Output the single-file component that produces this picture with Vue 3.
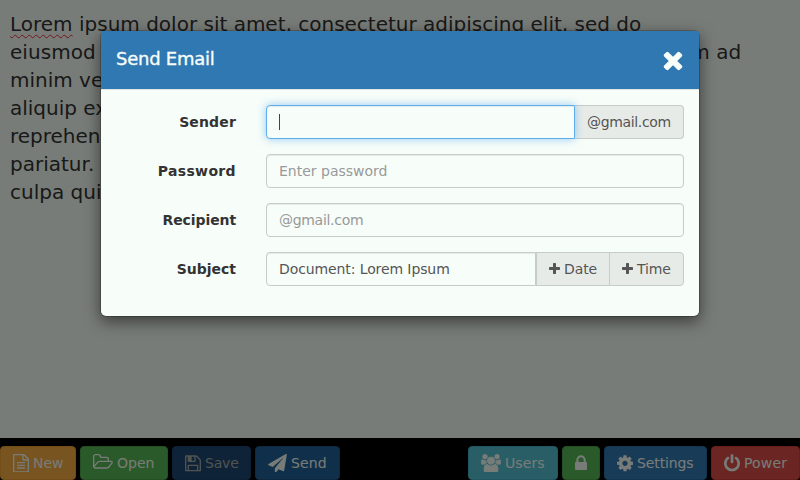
<script setup>
const editorLines = [
  ' ipsum dolor sit amet, consectetur adipiscing elit, sed do',
  'eiusmod tempor incididunt ut labore et dolore magna aliqua. Ut enim ad',
  'minim veniam, quis nostrud exercitation ullamco laboris nisi ut',
  'aliquip ex ea commodo consequat. Duis aute irure dolor in',
  'reprehenderit in voluptate velit esse cillum dolore eu fugiat nulla',
  'pariatur. Excepteur sint occaecat cupidatat non proident, sunt in',
  'culpa qui officia deserunt mollit anim id est laborum.'
]

const plus = 'M1600 736v192q0 40-28 68t-68 28h-416v416q0 40-28 68t-68 28h-192q-40 0-68-28t-28-68v-416h-416q-40 0-68-28t-28-68v-192q0-40 28-68t68-28h416v-416q0-40 28-68t68-28h192q40 0 68 28t28 68v416h416q40 0 68 28t28 68z'
const times = 'M1490 1322q0 40-28 68l-136 136q-28 28-68 28t-68-28l-294-294-294 294q-28 28-68 28t-68-28l-136-136q-28-28-28-68t28-68l294-294-294-294q-28-28-28-68t28-68l136-136q28-28 68-28t68 28l294 294 294-294q28-28 68-28t68 28l136 136q28 28 28 68t-28 68l-294 294 294 294q28 28 28 68z'

const leftButtons = [
  { kind: 'new', label: 'New', w: 16, box: '128 0 1536 1792', d: 'M1596 380q28 28 48 76t20 88v1152q0 40-28 68t-68 28h-1344q-40 0-68-28t-28-68v-1600q0-40 28-68t68-28h896q40 0 88 20t76 48zm-444-244v376h376q-10-29-22-41l-313-313q-12-12-41-22zm384 1528v-1024h-416q-40 0-68-28t-28-68v-416h-768v1536h1280zm-1024-864q0-14 9-23t23-9h704q14 0 23 9t9 23v64q0 14-9 23t-23 9h-704q-14 0-23-9t-9-23v-64zm736 224q14 0 23 9t9 23v64q0 14-9 23t-23 9h-704q-14 0-23-9t-9-23v-64q0-14 9-23t23-9h704zm0 256q14 0 23 9t9 23v64q0 14-9 23t-23 9h-704q-14 0-23-9t-9-23v-64q0-14 9-23t23-9h704z' },
  { kind: 'open', label: 'Open', w: 20, box: '0 0 1920 1792', d: 'M1781 803q0-35-53-35h-1088q-40 0-85.5 21.5t-71.5 52.5l-294 363q-18 24-18 40 0 35 53 35h1088q40 0 86-22t71-53l294-363q18-22 18-39zm-1141-163h768v-160q0-40-28-68t-68-28h-576q-40 0-68-28t-28-68v-64q0-40-28-68t-68-28h-320q-40 0-68 28t-28 68v853l256-315q44-53 116-87.5t140-34.5zm1269 163q0 62-46 120l-295 363q-43 53-116 87.5t-140 34.5h-1088q-92 0-158-66t-66-158v-960q0-92 66-158t158-66h320q92 0 158 66t66 158v32h544q92 0 158 66t66 158v160h192q54 0 99 24.5t67 70.5q15 32 15 68z' },
  { kind: 'save', label: 'Save', w: 16, box: '128 0 1536 1792', d: 'M512 1536h768v-384h-768v384zm896 0h128v-896q0-14-10-38.5t-20-34.5l-281-281q-10-10-34-20t-39-10v416q0 40-28 68t-68 28h-576q-40 0-68-28t-28-68v-416h-128v1280h128v-416q0-40 28-68t68-28h832q40 0 68 28t28 68v416zm-384-928v-320q0-13-9.5-22.5t-22.5-9.5h-192q-13 0-22.5 9.5t-9.5 22.5v320q0 13 9.5 22.5t22.5 9.5h192q13 0 22.5-9.5t9.5-22.5zm640 32v928q0 40-28 68t-68 28h-1344q-40 0-68-28t-28-68v-1344q0-40 28-68t68-28h928q40 0 88 20t76 48l280 280q28 28 48 76t20 88z' },
  { kind: 'send', label: 'Send', w: 19, box: '0 0 1792 1792', d: 'M1764 11q33 24 27 64l-256 1536q-5 29-32 45-14 8-31 8-11 0-24-5l-453-185-242 295q-18 23-49 23-13 0-22-4-19-7-30.5-23.5t-11.5-36.5v-349l864-1059-1069 925-395-162q-37-14-40-55-2-40 32-59l1664-960q15-9 32-9 20 0 36 11z' }
]

const rightButtons = [
  { kind: 'users', label: 'Users', w: 20, box: '0 0 1920 1792', d: 'M593 896q-162 5-265 128h-134q-82 0-138-40.5t-56-118.5q0-353 124-353 6 0 43.5 21t97.5 42.5 119 21.5q67 0 133-23-5 37-5 66 0 139 81 256zm1071 637q0 120-73 189.5t-194 69.5h-874q-121 0-194-69.5t-73-189.5q0-53 3.5-103.5t14-109 26.5-108.5 43-97.5 62-81 85.5-53.5 111.5-20q10 0 43 21.5t73 48 107 48 135 21.5 135-21.5 107-48 73-48 43-21.5q61 0 111.5 20t85.5 53.5 62 81 43 97.5 26.5 108.5 14 109 3.5 103.5zm-1024-1277q0 106-75 181t-181 75-181-75-75-181 75-181 181-75 181 75 75 181zm704 384q0 159-112.5 271.5t-271.5 112.5-271.5-112.5-112.5-271.5 112.5-271.5 271.5-112.5 271.5 112.5 112.5 271.5zm576 225q0 78-56 118.5t-138 40.5h-134q-103-123-265-128 81-117 81-256 0-29-5-66 66 23 133 23 59 0 119-21.5t97.5-42.5 43.5-21q124 0 124 353zm-128-609q0 106-75 181t-181 75-181-75-75-181 75-181 181-75 181 75 75 181z' },
  { kind: 'lock', label: '', w: 12, box: '320 0 1152 1792', d: 'M640 768h512v-192q0-106-75-181t-181-75-181 75-75 181v192zm832 96v576q0 40-28 68t-68 28h-960q-40 0-68-28t-28-68v-576q0-40 28-68t68-28h32v-192q0-184 132-316t316-132 316 132 132 316v192h32q40 0 68 28t28 68z' },
  { kind: 'settings', label: 'Settings', w: 16, box: '128 0 1536 1792', d: 'M1152 896q0-106-75-181t-181-75-181 75-75 181 75 181 181 75 181-75 75-181zm512-109v222q0 12-8 23t-20 13l-185 28q-19 54-39 91 35 50 107 138 10 12 10 25t-9 23q-27 37-99 108t-94 71q-12 0-26-9l-138-108q-44 23-91 38-16 136-29 186-7 28-36 28h-222q-14 0-24.5-8.5t-11.5-21.5l-28-184q-49-16-90-37l-141 107q-10 9-25 9-14 0-25-11-126-114-165-168-7-10-7-23 0-12 8-23 15-21 51-66.5t54-70.5q-27-50-41-99l-183-27q-13-2-21-12.5t-8-23.5v-222q0-12 8-23t19-13l186-28q14-46 39-92-40-57-107-138-10-12-10-24 0-10 9-23 26-36 98.5-107.5t94.5-71.5q13 0 26 10l138 107q44-23 91-38 16-136 29-186 7-28 36-28h222q14 0 24.5 8.5t11.5 21.5l28 184q49 16 90 37l142-107q9-9 24-9 13 0 25 10 129 119 165 170 7 8 7 22 0 12-8 23-15 21-51 66.5t-54 70.5q26 50 41 98l183 28q13 2 21 12.5t8 23.5z' },
  { kind: 'power', label: 'Power', w: 16, box: '128 0 1536 1792', d: 'M1664 896q0 156-61 298t-164 245-245 164-298 61-298-61-245-164-164-245-61-298q0-182 80.5-343t226.5-270q43-32 95.5-25t83.5 50q32 42 24.5 94.5t-49.5 84.5q-98 74-151.5 181t-53.5 228q0 104 40.5 198.5t109.5 163.5 163.5 109.5 198.5 40.5 198.5-40.5 163.5-109.5 109.5-163.5 40.5-198.5q0-121-53.5-228t-151.5-181q-42-32-49.5-84.5t24.5-94.5q31-43 84-50t95 25q146 109 226.5 270t80.5 343zm-640-768v640q0 52-38 90t-90 38-90-38-38-90v-640q0-52 38-90t90-38 90 38 38 90z' }
]
</script>

<template>
  <div class="screen">
    <main class="editor">
      <div v-for="(line, i) in editorLines" :key="i" class="line"><span v-if="i === 0" class="misspelled">Lorem</span>{{ line }}</div>
    </main>
    <footer class="toolbar">
      <div v-for="(group, g) in [leftButtons, rightButtons]" :key="g" class="group">
        <button v-for="b in group" :key="b.kind" class="btn" :class="b.kind">
          <svg class="icon" :width="b.w" height="18.67" :viewBox="b.box"><path :d="b.d" /></svg>
          <span v-if="b.label">{{ b.label }}</span>
        </button>
      </div>
    </footer>
    <div class="backdrop">
      <section class="modal">
        <header class="modal-header">
          <h4>Send Email</h4>
          <svg class="close" width="22" height="28" viewBox="192 0 1408 1792"><path :d="times" /></svg>
        </header>
        <div class="modal-body">
          <div class="row">
            <label class="l-sender">Sender</label>
            <div class="field">
              <div class="control focused"><span class="caret"></span></div>
              <div class="addon mail">@gmail.com</div>
            </div>
          </div>
          <div class="row">
            <label class="l-password">Password</label>
            <div class="field"><div class="control placeholder">Enter password</div></div>
          </div>
          <div class="row">
            <label class="l-recipient">Recipient</label>
            <div class="field"><div class="control placeholder tight">@gmail.com</div></div>
          </div>
          <div class="row">
            <label>Subject</label>
            <div class="field">
              <div class="control joined">Document: Lorem Ipsum</div>
              <button class="addon date"><svg width="11" height="14" viewBox="192 0 1408 1792"><path :d="plus" /></svg>Date</button>
              <button class="addon time"><svg width="11" height="14" viewBox="192 0 1408 1792"><path :d="plus" /></svg>Time</button>
            </div>
          </div>
        </div>
      </section>
    </div>
  </div>
</template>

<style>
body { margin: 0; overflow: hidden; }
</style>

<style scoped>
* { box-sizing: border-box; }
.screen {
  position: relative;
  width: 800px;
  height: 480px;
  display: flex;
  flex-direction: column;
  overflow: hidden;
  background: #f0f8f1;
  font: 14px/20px "DejaVu Sans", sans-serif;
  color: #333;
}
button { font: inherit; margin: 0; }
svg { display: block; flex: none; fill: currentColor; }
.editor { flex: 1; padding: 10px; font-size: 20px; line-height: 28px; color: #303330; }
.line { white-space: pre; }
.line:nth-child(2) { letter-spacing: .055px; }
.misspelled {
  text-decoration: underline wavy #e83038 1px;
  text-decoration-skip-ink: none;
  text-underline-offset: 3px;
}
.toolbar {
  height: 42px;
  padding-top: 8px;
  display: flex;
  justify-content: space-between;
  background: #000;
}
.group { display: flex; gap: 4px; }
.btn {
  height: 34px;
  padding: 0 12px;
  display: flex;
  align-items: center;
  gap: 4px;
  border: 1px solid transparent;
  border-radius: 4px;
  color: #f0f8f1;
  white-space: nowrap;
}
.new { width: 76px; background: #f0a840; border-color: #e69a30; }
.open { width: 88px; background: #54b454; border-color: #48a048; }
.save { width: 79px; background: #1e4670; border-color: #1b4068; color: #a2a6a3; letter-spacing: -.2px; }
.send { width: 85px; background: #205f94; border-color: #1c527f; letter-spacing: .1px; }
.users { width: 90px; background: #54bccc; border-color: #42aec0; letter-spacing: .1px; }
.lock { width: 38px; background: #54b454; border-color: #48a048; }
.settings { width: 103px; background: #3078b1; border-color: #286a9e; letter-spacing: -.12px; }
.power { width: 89px; background: #d64c46; border-color: #cc3c36; letter-spacing: .15px; }
.backdrop {
  position: absolute;
  inset: 0;
  padding: 30px 100px;
  background: rgba(0, 0, 0, .5);
}
.modal {
  width: 600px;
  height: 287px;
  border: 1px solid rgba(0, 0, 0, .2);
  border-radius: 6px;
  background: #f7fdf9;
  background-clip: padding-box;
  box-shadow: 0 5px 15px rgba(0, 0, 0, .5);
}
.modal-header {
  height: 59px;
  padding: 0 15px;
  display: flex;
  align-items: center;
  justify-content: space-between;
  border-bottom: 1px solid #dfe5e1;
  border-radius: 2px 2px 0 0;
  background: #3078b1;
  color: #f7fdf9;
}
h4 {
  margin: 0 0 2px;
  font-size: 18px;
  line-height: 20px;
  font-weight: 500;
  letter-spacing: -.25px;
  -webkit-text-stroke: .35px currentColor;
}
.close { margin: 0; }
.modal-body { padding: 15px; display: flex; flex-direction: column; gap: 15px; }
.row { display: flex; align-items: center; gap: 30px; }
label { width: 120px; text-align: right; font-weight: 700; }
.l-sender { letter-spacing: .15px; }
.l-password { letter-spacing: .35px; }
.l-recipient { letter-spacing: -.1px; }
.field { flex: 1; display: flex; height: 34px; }
.control, .addon {
  height: 34px;
  display: flex;
  align-items: center;
  padding: 0 12px;
  border: 1px solid #c6ccc8;
  border-radius: 4px;
  white-space: nowrap;
}
.control {
  flex: 1;
  background: #f7fdf9;
  color: #555;
  box-shadow: inset 0 1px 1px rgba(0, 0, 0, .075);
}
.placeholder { color: #999; }
.tight { letter-spacing: -.3px; }
.focused {
  z-index: 1;
  border-color: #5caeec;
  border-radius: 4px 0 0 4px;
  box-shadow: inset 0 1px 1px rgba(0, 0, 0, .075), 0 0 8px rgba(82, 168, 236, .6);
}
.caret { width: 1px; height: 16px; background: #444; }
.joined { border-radius: 4px 0 0 4px; letter-spacing: -.1px; }
.addon { background: #e7ebe7; color: #555; gap: 4px; }
.mail { width: 109px; border-left: 0; border-radius: 0 4px 4px 0; letter-spacing: -.35px; }
.date { width: 74px; border-radius: 0; letter-spacing: -.1px; }
.time { width: 75px; margin-left: -1px; border-radius: 0 4px 4px 0; letter-spacing: -.1px; }
</style>
